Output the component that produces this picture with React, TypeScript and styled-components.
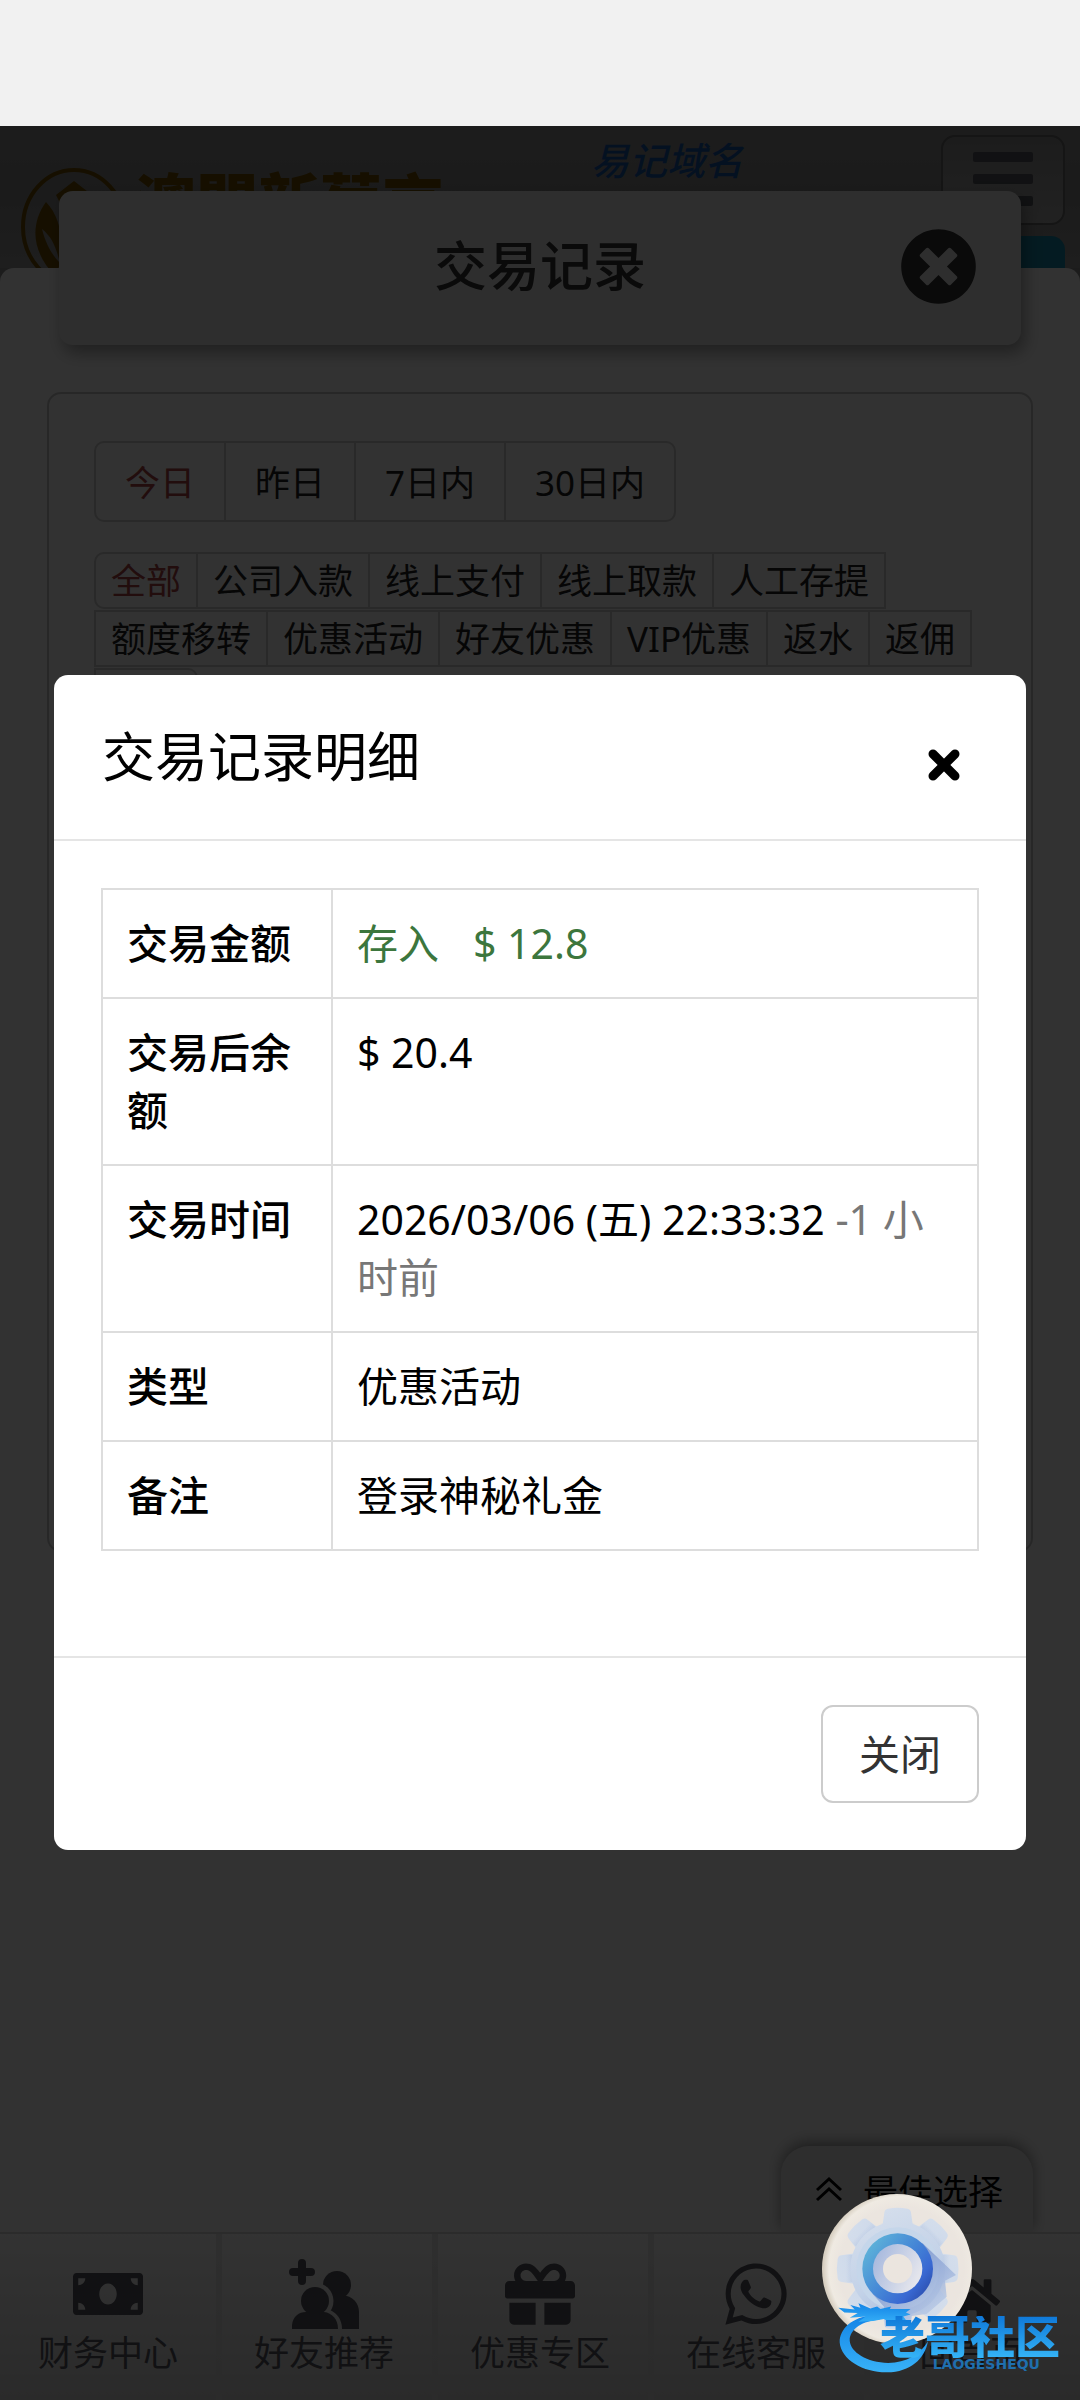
import React from 'react';
import styled, { createGlobalStyle } from 'styled-components';
import { FaGift, FaHome, FaMoneyBill, FaTimesCircle, FaWhatsapp } from 'react-icons/fa';

const GlobalStyle = createGlobalStyle`
  *, *::before, *::after { box-sizing: border-box; }
  body {
    margin: 0;
    background: #fff;
    color: #333;
    font-family: "Noto Sans", "Noto Sans CJK SC", sans-serif;
    font-size: 35px;
  }
  button { font: inherit; color: inherit; margin: 0; padding: 0; background: none; border: 0; cursor: pointer; }
  a { color: inherit; text-decoration: none; }
  h1, h2 { margin: 0; }
  svg { display: block; }
`;

const Screen = styled.div`
  min-height: 100vh;
  display: flex;
  flex-direction: column;
`;

const StatusBar = styled.div`
  height: 126px;
  background: #f1f1f1;
`;

const Stage = styled.div`
  position: relative;
  flex: 1;
  display: flex;
  flex-direction: column;
  overflow: hidden;
  background: #8c8c8c;
`;

/* ---------- site header ---------- */

const Header = styled.header`
  display: flex;
  align-items: flex-start;
  height: 142px;
  padding: 0 15px 0 20px;
  background: linear-gradient(#8e8e8e 0%, #868686 45%, #969696 100%);
`;

const Brand = styled.a`
  display: flex;
  gap: 4px;
  padding-top: 41px;
  color: #704e00;
`;

const BrandName = styled.span`
  font-family: "Noto Sans CJK TC", sans-serif;
  font-size: 62px;
  font-weight: 900;
  line-height: 64px;
  white-space: nowrap;
`;

const DomainLink = styled.a`
  margin-left: 147px;
  padding-top: 10px;
  color: #1656a6;
  font-size: 38px;
  font-style: italic;
  font-weight: 500;
  line-height: 48px;
  white-space: nowrap;
`;

const HeaderTools = styled.div`
  display: flex;
  flex-direction: column;
  gap: 11px;
  width: 124px;
  margin-left: auto;
  padding-top: 9px;
`;

const MenuButton = styled.button`
  display: flex;
  flex-direction: column;
  align-items: center;
  gap: 12px;
  height: 90px;
  padding-top: 15px;
  border: 2px solid #686868;
  border-radius: 14px;
  background: linear-gradient(#8c8c8c, #a8a8a8);
`;

const MenuBar = styled.span`
  width: 60px;
  height: 10px;
  border-radius: 2px;
  background: #54575e;
`;

const AccountButton = styled.button`
  height: 60px;
  border-radius: 14px;
  background: #1788a8;
`;

/* ---------- transaction page ---------- */

const Sheet = styled.main`
  flex: 1;
  padding: 0 47px;
  border-radius: 14px 14px 0 0;
  background: #f9f9f9;
`;

const TitleCard = styled.div`
  position: relative;
  display: grid;
  grid-template-columns: 1fr auto 1fr;
  align-items: center;
  height: 154px;
  margin: -77px 12px 47px;
  padding: 0 44px 4px;
  border-radius: 14px;
  background: #e5e5e5;
  box-shadow: 4px 8px 16px rgba(0, 0, 0, 0.35);
`;

const PageTitle = styled.h1`
  grid-column: 2;
  font-size: 53px;
  font-weight: 500;
  line-height: 64px;
`;

const RoundClose = styled.button`
  justify-self: end;
  font-size: 77px;
`;

const RecordBox = styled.section`
  height: 1160px;
  padding: 47px 45px;
  border: 2px solid #c4c4c4;
  border-radius: 14px;
`;

const DateTabs = styled.div`
  display: inline-flex;
  height: 81px;
  margin-bottom: 30px;
  border: 2px solid #cacaca;
  border-radius: 10px;
`;

const DateTab = styled.button<{ $active?: boolean }>`
  padding: 0 29px 3px;
  color: ${(p) => (p.$active ? '#a94442' : '#222')};
  & + & { border-left: 2px solid #cacaca; }
`;

const TypeTabs = styled.div`
  display: flex;
  flex-wrap: wrap;
  row-gap: 1px;
`;

const TypeTab = styled.button<{ $active?: boolean }>`
  height: 57px;
  margin-right: -2px;
  padding: 0 15px;
  border: 2px solid #cacaca;
  color: ${(p) => (p.$active ? '#a94442' : '#222')};
  line-height: 48px;
  &:first-child { border-radius: 10px 0 0 10px; }
  &:last-child { border-radius: 0 10px 10px 0; min-width: 104px; }
`;

/* ---------- bottom bar ---------- */

const Dock = styled.div`
  display: flex;
  flex-direction: column;
  background: #f9f9f9;
`;

const BestPick = styled.button`
  display: flex;
  align-items: center;
  align-self: flex-end;
  gap: 20px;
  height: 86px;
  margin-right: 47px;
  padding: 0 30px 0 34px;
  border-radius: 28px 28px 0 0;
  background: #e6e6e6;
  box-shadow: 0 -4px 14px rgba(0, 0, 0, 0.4);
  color: #000;
`;

const NavBar = styled.nav`
  position: relative;
  display: grid;
  grid-template-columns: repeat(5, 1fr);
  height: 168px;
  border-top: 2px solid #d8d8d8;
  background: linear-gradient(#fcfcfc, #d2d2d2);
`;

const NavItem = styled.a`
  display: flex;
  flex-direction: column;
  align-items: center;
  padding-top: 25px;
  color: #56565e;
  line-height: 48px;
  & + & {
    padding-right: 6px;
    border-left: 6px solid;
    border-image: linear-gradient(#e6e6e6, #d4d4d4) 1;
  }
`;

const NavIcon = styled.span<{ $size?: number }>`
  display: flex;
  align-items: flex-end;
  height: 70px;
  font-size: ${(p) => p.$size ?? 70}px;
`;

/* ---------- dialog ---------- */

const Backdrop = styled.div`
  position: absolute;
  inset: 0;
  padding: 549px 54px 0;
  background: rgba(0, 0, 0, 0.8);
`;

const Dialog = styled.section`
  border-radius: 14px;
  background: #fff;
  color: #000;
`;

const DialogHeader = styled.div`
  display: flex;
  align-items: center;
  justify-content: space-between;
  height: 166px;
  padding: 0 65px 0 48px;
  border-bottom: 2px solid #e5e5e5;
`;

const DialogTitle = styled.h2`
  font-size: 53px;
  font-weight: 400;
  line-height: 64px;
`;

const DialogClose = styled.button`
  padding-top: 16px;
`;

const DialogBody = styled.div`
  padding: 47px 47px 105px;
`;

const DetailTable = styled.table`
  width: 100%;
  border-collapse: collapse;
  table-layout: fixed;
  font-size: 41px;
  line-height: 58px;
  th, td {
    padding: 24px 24px 25px;
    border: 2px solid #ddd;
    text-align: left;
    vertical-align: top;
  }
  th { width: 230px; font-weight: 500; }
`;

const Deposit = styled.span`
  display: inline-flex;
  gap: 34px;
  color: #3c763d;
`;

const Muted = styled.span`
  color: #777;
`;

const DialogFooter = styled.div`
  display: flex;
  justify-content: flex-end;
  padding: 47px;
  border-top: 2px solid #e5e5e5;
`;

const CloseButton = styled.button`
  height: 98px;
  padding: 0 36px 4px;
  border: 2px solid #ccc;
  border-radius: 12px;
  color: #333;
  font-size: 41px;
`;

/* ---------- floating parts ---------- */

const FloatButton = styled.button`
  position: absolute;
  right: 108px;
  bottom: 56px;
`;

const Community = styled.div`
  position: absolute;
  right: 20px;
  bottom: 26px;
  display: flex;
`;

const CommunityText = styled.div`
  display: flex;
  flex-direction: column;
  align-items: flex-end;
  margin-left: -50px;
  padding-top: 14px;
`;

const CommunityName = styled.span`
  background: linear-gradient(#0f78d8, #35b4f6);
  background-clip: text;
  -webkit-background-clip: text;
  color: transparent;
  font-size: 45px;
  font-weight: 900;
  line-height: 42px;
`;

const CommunityLatin = styled.span`
  padding-right: 20px;
  color: #1f6fae;
  font-family: "DejaVu Sans", sans-serif;
  font-size: 14px;
  font-weight: 700;
  line-height: 12px;
`;

const Emblem = () => (
  <svg width="110" height="118" viewBox="0 0 110 118" fill="none" aria-hidden="true">
    <ellipse cx="54" cy="60" rx="51" ry="57" stroke="currentColor" strokeWidth="4" />
    <path d="M54 14 L72 28 L64 44 L54 34 L44 44 L36 28Z" fill="currentColor" />
    <path d="M26 35 C8 60 14 88 36 110 C46 80 42 52 26 35Z" fill="currentColor" />
    <path d="M22 62 C26 78 32 88 40 96 C36 80 32 70 22 62Z" fill="#8c8c8c" />
    <path d="M82 35 C100 60 94 88 72 110 C62 80 66 52 82 35Z" fill="currentColor" />
  </svg>
);

const FriendsIcon = () => (
  <svg width="70" height="70" viewBox="0 0 70 70" aria-hidden="true">
    <defs>
      <mask id="friend-gap">
        <rect width="70" height="70" fill="#fff" />
        <circle cx="26" cy="42" r="18.5" />
        <path d="M0 70 V62 C4 50 12 48 26 48 C42 48 53 56 53 70Z" />
      </mask>
    </defs>
    <g fill="currentColor">
      <path d="M9 9 V4 a4 4 0 0 1 8 0 V9 H22 a4 4 0 0 1 0 8 H17 V22 a4 4 0 0 1-8 0 V17 H4 a4 4 0 0 1 0-8Z" />
      <circle cx="26" cy="42" r="14" />
      <path d="M3 70 V66 C4 57 10 53 17 53 H35 C43 54 49 60 49 70Z" />
      <g mask="url(#friend-gap)">
        <circle cx="48" cy="26" r="14" />
        <path d="M40 34 L53 36 C64 37 70 44 70 53 V70 H40Z" />
      </g>
    </g>
  </svg>
);

const ChevronsIcon = () => (
  <svg width="28" height="28" viewBox="0 0 28 28" fill="none" stroke="currentColor" strokeWidth="3" aria-hidden="true">
    <path d="M2 15 L14 4 L26 15 M2 25 L14 14 L26 25" />
  </svg>
);

const CrossIcon = () => (
  <svg width="34" height="34" viewBox="0 0 34 34" stroke="currentColor" strokeWidth="9" strokeLinecap="round" aria-hidden="true">
    <path d="M6 6 L28 28 M28 6 L6 28" />
  </svg>
);

const GearIcon = () => (
  <svg width="150" height="150" viewBox="186 252 450 450" aria-hidden="true">
    <defs>
      <radialGradient id="disc" cx="0.53" cy="0.5" r="0.52">
        <stop offset="0.8" stopColor="#ebe5df" />
        <stop offset="0.93" stopColor="#efeae2" />
        <stop offset="1" stopColor="#d8d0c2" />
      </radialGradient>
      <linearGradient id="gear" gradientUnits="userSpaceOnUse" x1="330" y1="290" x2="500" y2="660">
        <stop offset="0" stopColor="#d6dfec" />
        <stop offset="0.55" stopColor="#c3d2e8" />
        <stop offset="1" stopColor="#9fb4d9" />
      </linearGradient>
      <linearGradient id="toothShade" gradientUnits="userSpaceOnUse" x1="0" y1="300" x2="0" y2="370">
        <stop offset="0.3" stopColor="#8ea6d4" stopOpacity="0" />
        <stop offset="1" stopColor="#8ea6d4" stopOpacity="0.55" />
      </linearGradient>
      <linearGradient id="ring" x1="0" y1="0.2" x2="0.9" y2="0.9">
        <stop offset="0" stopColor="#5fb6d9" />
        <stop offset="0.5" stopColor="#4586d6" />
        <stop offset="0.8" stopColor="#3968d2" />
        <stop offset="1" stopColor="#2c4fae" />
      </linearGradient>
      <linearGradient id="inner" x1="0" y1="0" x2="1" y2="0.5">
        <stop offset="0" stopColor="#9fb3dc" />
        <stop offset="1" stopColor="#e4e5ec" />
      </linearGradient>
      <linearGradient id="cast" gradientUnits="userSpaceOnUse" x1="440" y1="470" x2="530" y2="590">
        <stop offset="0" stopColor="#7f98cf" />
        <stop offset="1" stopColor="#b4c6e4" />
      </linearGradient>
    </defs>
    <circle cx="411" cy="477" r="225" fill="url(#disc)" />
    {[0, 45, 90, 135, 180, 225, 270, 315].map((a) => (
      <path
        key={a}
        d="M384 296 Q413 291 442 296 Q452 298 453 308 L459 350 H367 L373 308 Q374 298 384 296Z"
        fill="url(#gear)"
        transform={`rotate(${a} 413 476)`}
      />
    ))}
    {[45, 90, 270, 315].map((a) => (
      <rect key={a} x="372" y="296" width="82" height="56" rx="12" fill="url(#toothShade)" transform={`rotate(${a} 413 476)`} />
    ))}
    <circle cx="413" cy="476" r="142" fill="url(#gear)" />
    <circle cx="413" cy="476" r="124" fill="#c5d6ea" />
    <path d="M488 400 L588 495 L555 512 L560 560 L500 612 L455 618 L450 650 H375 L372 590 L338 552Z" fill="url(#cast)" opacity="0.8" />
    <circle cx="413" cy="476" r="106" fill="url(#ring)" />
    <circle cx="413" cy="476" r="74" fill="url(#inner)" />
    <circle cx="413" cy="476" r="44" fill="#ebe5df" />
  </svg>
);

const SwooshIcon = () => (
  <svg width="92" height="72" viewBox="235 575 275 215" aria-hidden="true">
    <defs>
      <linearGradient id="swoosh" x1="0" y1="0" x2="0" y2="1">
        <stop offset="0" stopColor="#1283e6" />
        <stop offset="1" stopColor="#38b2f8" />
      </linearGradient>
    </defs>
    <path
      d="M345 612 C275 620 240 655 240 695 C244 748 312 786 382 785 C452 784 494 745 504 692 C480 732 440 756 385 757 C322 756 272 725 270 690 C270 655 310 630 360 628Z"
      fill="url(#swoosh)"
    />
    <path
      d="M236 592 L285 597 L272 584 L302 592 L296 579 L332 594 L352 588 L362 596 L394 588 L390 596 L452 596 L438 606 L452 612 L430 618 L442 634 L412 628 L398 640 L372 626 L340 632 L296 634 L318 618 L270 622 L294 608 L254 606Z"
      fill="url(#swoosh)"
    />
  </svg>
);

const types = ['全部', '公司入款', '线上支付', '线上取款', '人工存提', '额度移转', '优惠活动', '好友优惠', 'VIP优惠', '返水', '返佣'];

export default function App() {
  return (
    <Screen>
      <GlobalStyle />
      <StatusBar />
      <Stage>
        <Header>
          <Brand href="#home">
            <Emblem />
            <BrandName>澳門新葡京</BrandName>
          </Brand>
          <DomainLink href="#domain">易记域名</DomainLink>
          <HeaderTools>
            <MenuButton aria-label="菜单">
              <MenuBar />
              <MenuBar />
              <MenuBar />
            </MenuButton>
            <AccountButton aria-label="账户" />
          </HeaderTools>
        </Header>

        <Sheet>
          <TitleCard>
            <PageTitle>交易记录</PageTitle>
            <RoundClose aria-label="关闭页面">
              <FaTimesCircle />
            </RoundClose>
          </TitleCard>
          <RecordBox>
            <DateTabs>
              <DateTab $active>今日</DateTab>
              <DateTab>昨日</DateTab>
              <DateTab>7日内</DateTab>
              <DateTab>30日内</DateTab>
            </DateTabs>
            <TypeTabs>
              {types.map((t, i) => (
                <TypeTab key={t} $active={i === 0}>{t}</TypeTab>
              ))}
              <TypeTab aria-label="其他" />
            </TypeTabs>
          </RecordBox>
        </Sheet>

        <Dock>
          <BestPick>
            <ChevronsIcon />
            最佳选择
          </BestPick>
          <NavBar>
            <NavItem href="#finance">
              <NavIcon><FaMoneyBill /></NavIcon>
              财务中心
            </NavItem>
            <NavItem href="#friends">
              <NavIcon><FriendsIcon /></NavIcon>
              好友推荐
            </NavItem>
            <NavItem href="#offers">
              <NavIcon><FaGift /></NavIcon>
              优惠专区
            </NavItem>
            <NavItem href="#service">
              <NavIcon><FaWhatsapp /></NavIcon>
              在线客服
            </NavItem>
            <NavItem href="#home">
              <NavIcon $size={56}><FaHome /></NavIcon>
              回首页
            </NavItem>
          </NavBar>
        </Dock>

        <Backdrop>
          <Dialog role="dialog" aria-modal="true" aria-labelledby="detail-title">
            <DialogHeader>
              <DialogTitle id="detail-title">交易记录明细</DialogTitle>
              <DialogClose aria-label="关闭明细">
                <CrossIcon />
              </DialogClose>
            </DialogHeader>
            <DialogBody>
              <DetailTable>
                <tbody>
                  <tr>
                    <th scope="row">交易金额</th>
                    <td><Deposit><span>存入</span><span>$ 12.8</span></Deposit></td>
                  </tr>
                  <tr>
                    <th scope="row">交易后余额</th>
                    <td>$ 20.4</td>
                  </tr>
                  <tr>
                    <th scope="row">交易时间</th>
                    <td>2026/03/06 (五) 22:33:32 <Muted>-1 小时前</Muted></td>
                  </tr>
                  <tr>
                    <th scope="row">类型</th>
                    <td>优惠活动</td>
                  </tr>
                  <tr>
                    <th scope="row">备注</th>
                    <td>登录神秘礼金</td>
                  </tr>
                </tbody>
              </DetailTable>
            </DialogBody>
            <DialogFooter>
              <CloseButton>关闭</CloseButton>
            </DialogFooter>
          </Dialog>
        </Backdrop>

        <FloatButton aria-label="设置">
          <GearIcon />
        </FloatButton>
        <Community>
          <SwooshIcon />
          <CommunityText>
            <CommunityName>老哥社区</CommunityName>
            <CommunityLatin>LAOGESHEQU</CommunityLatin>
          </CommunityText>
        </Community>
      </Stage>
    </Screen>
  );
}
